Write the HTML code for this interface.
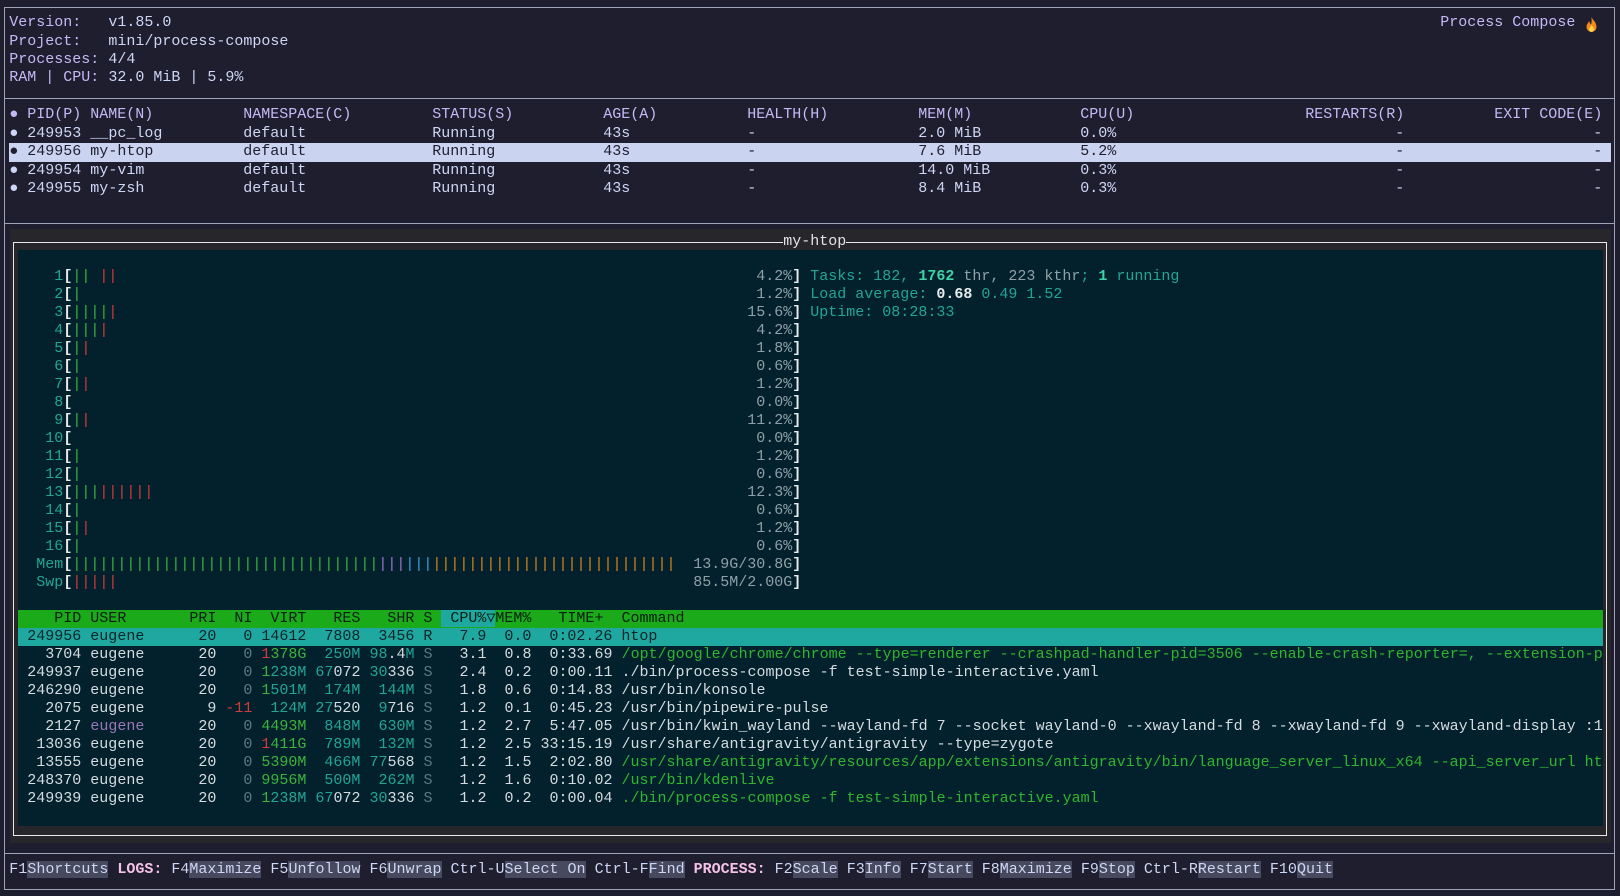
<!DOCTYPE html>
<html><head><meta charset="utf-8"><style>
*{margin:0;padding:0;box-sizing:border-box}
body{width:1620px;height:896px;background:#1e1e2e;position:relative;overflow:hidden;font-family:"Liberation Mono","DejaVu Sans Mono",monospace;font-size:15px;color:#cdd6f4}
.t{position:absolute;white-space:pre;line-height:18.42px;height:18.42px}
.h{position:absolute;white-space:pre;line-height:18px;height:18px;left:18.3px;color:#d4dcdf}
.ln{position:absolute;background:#9ea3b8}
.lb{color:#c6b8f5}
.w{color:#d4dcdf}.c{color:#22a597}.g{color:#3cb43c}.r{color:#d23b3b}.d{color:#5d7a82}.p{color:#9a78b8}.gc{color:#2fb52f}
.o{color:#d4861f}.pu{color:#9a78c8}.bl{color:#3aa0e0}.br{color:#e6ebec;font-weight:bold}.pc{color:#8fa0a6}
.k{color:#cdd6f4}.lab{background:#474a5e;color:#cdd6f4}.sec{color:#f5c2e7;font-weight:bold}
</style></head><body>
<!-- outer borders -->
<div class="ln" style="left:4px;top:7px;width:1611px;height:1px"></div>
<div class="ln" style="left:4px;top:889px;width:1611px;height:1px"></div>
<div class="ln" style="left:4px;top:7px;width:1px;height:883px"></div>
<div class="ln" style="left:1614px;top:7px;width:1px;height:883px"></div>
<div class="ln" style="left:4px;top:98px;width:1611px;height:1px"></div>
<div class="ln" style="left:4px;top:223px;width:1611px;height:1px"></div>
<div class="ln" style="left:4px;top:853px;width:1611px;height:1px"></div>

<!-- header -->
<div class="t" style="left:9.3px;top:14.1px"><span class="lb">Version:</span>   v1.85.0</div>
<div class="t" style="left:9.3px;top:32.5px"><span class="lb">Project:</span>   mini/process-compose</div>
<div class="t" style="left:9.3px;top:50.9px"><span class="lb">Processes:</span> 4/4</div>
<div class="t" style="left:9.3px;top:69.4px"><span class="lb">RAM | CPU:</span> 32.0 MiB | 5.9%</div>
<div class="t lb" style="left:1440.3px;top:14.1px">Process Compose</div>
<svg style="position:absolute;left:1585px;top:17px" width="13" height="16" viewBox="0 0 13 16"><path d="M6.5 0C7.5 3 11.5 5 11.5 10a5 5 0 0 1-10 0c0-3 2-4 2.5-6 1 1.5 1 3 2 3.5C7 5 6.5 2.5 6.5 0z" fill="#f08a1c"/><path d="M6.5 8c1 1.5 2.5 2.5 2.5 4.5a2.5 2.5 0 0 1-5 0c0-1.5 1.5-2.5 2.5-4.5z" fill="#ffd04a"/></svg>

<!-- process table -->
<div style="position:absolute;left:9.3px;top:143.1px;width:1602px;height:18.42px;background:#cad3f0"></div>
<div class="t lb" style="left:9.3px;top:106.2px">●</div>
<div class="t lb" style="left:27.3px;top:106.2px">PID(P)</div>
<div class="t lb" style="left:90.3px;top:106.2px">NAME(N)</div>
<div class="t lb" style="left:243.3px;top:106.2px">NAMESPACE(C)</div>
<div class="t lb" style="left:432.3px;top:106.2px">STATUS(S)</div>
<div class="t lb" style="left:603.3px;top:106.2px">AGE(A)</div>
<div class="t lb" style="left:747.3px;top:106.2px">HEALTH(H)</div>
<div class="t lb" style="left:918.3px;top:106.2px">MEM(M)</div>
<div class="t lb" style="left:1080.3px;top:106.2px">CPU(U)</div>
<div class="t lb" style="left:1305.3px;top:106.2px">RESTARTS(R)</div>
<div class="t lb" style="left:1494.3px;top:106.2px">EXIT CODE(E)</div>

<div class="t" style="left:9.3px;top:124.6px">● 249953 __pc_log</div>
<div class="t" style="left:243.3px;top:124.6px">default</div><div class="t" style="left:432.3px;top:124.6px">Running</div><div class="t" style="left:603.3px;top:124.6px">43s</div><div class="t" style="left:747.3px;top:124.6px">-</div><div class="t" style="left:918.3px;top:124.6px">2.0 MiB</div><div class="t" style="left:1080.3px;top:124.6px">0.0%</div><div class="t" style="left:1395.3px;top:124.6px">-</div><div class="t" style="left:1593.3px;top:124.6px">-</div>

<div class="t" style="left:9.3px;top:143.1px;color:#1e1e2e">● 249956 my-htop</div>
<div class="t" style="left:243.3px;top:143.1px;color:#1e1e2e">default</div><div class="t" style="left:432.3px;top:143.1px;color:#1e1e2e">Running</div><div class="t" style="left:603.3px;top:143.1px;color:#1e1e2e">43s</div><div class="t" style="left:747.3px;top:143.1px;color:#1e1e2e">-</div><div class="t" style="left:918.3px;top:143.1px;color:#1e1e2e">7.6 MiB</div><div class="t" style="left:1080.3px;top:143.1px;color:#1e1e2e">5.2%</div><div class="t" style="left:1395.3px;top:143.1px;color:#1e1e2e">-</div><div class="t" style="left:1593.3px;top:143.1px;color:#1e1e2e">-</div>

<div class="t" style="left:9.3px;top:161.5px">● 249954 my-vim</div>
<div class="t" style="left:243.3px;top:161.5px">default</div><div class="t" style="left:432.3px;top:161.5px">Running</div><div class="t" style="left:603.3px;top:161.5px">43s</div><div class="t" style="left:747.3px;top:161.5px">-</div><div class="t" style="left:918.3px;top:161.5px">14.0 MiB</div><div class="t" style="left:1080.3px;top:161.5px">0.3%</div><div class="t" style="left:1395.3px;top:161.5px">-</div><div class="t" style="left:1593.3px;top:161.5px">-</div>

<div class="t" style="left:9.3px;top:179.9px">● 249955 my-zsh</div>
<div class="t" style="left:243.3px;top:179.9px">default</div><div class="t" style="left:432.3px;top:179.9px">Running</div><div class="t" style="left:603.3px;top:179.9px">43s</div><div class="t" style="left:747.3px;top:179.9px">-</div><div class="t" style="left:918.3px;top:179.9px">8.4 MiB</div><div class="t" style="left:1080.3px;top:179.9px">0.3%</div><div class="t" style="left:1395.3px;top:179.9px">-</div><div class="t" style="left:1593.3px;top:179.9px">-</div>

<!-- htop panel -->
<div style="position:absolute;left:10px;top:229px;width:1601px;height:614px;background:#27272b"></div>
<div style="position:absolute;left:13px;top:242px;width:1594px;height:594px;border:1px solid #e8e8e8"></div>
<div class="t" style="left:783.3px;top:233px;background:#27272b;color:#e4e4e4">my-htop</div>
<div style="position:absolute;left:18.3px;top:250px;width:1585px;height:576px;background:#03212d;overflow:hidden">
<div style="position:relative;left:-18.3px;top:-250px">
<!-- meters -->
<div class="h c" style="left:36.3px;top:267.7px">  1<span class="br">[</span><span class="g">||</span> <span class="r">||</span></div>
<div class="h c" style="left:36.3px;top:285.7px">  2<span class="br">[</span><span class="g">|</span></div>
<div class="h c" style="left:36.3px;top:303.7px">  3<span class="br">[</span><span class="g">||||</span><span class="r">|</span></div>
<div class="h c" style="left:36.3px;top:321.7px">  4<span class="br">[</span><span class="g">|||</span><span class="r">|</span></div>
<div class="h c" style="left:36.3px;top:339.7px">  5<span class="br">[</span><span class="g">|</span><span class="r">|</span></div>
<div class="h c" style="left:36.3px;top:357.7px">  6<span class="br">[</span><span class="g">|</span></div>
<div class="h c" style="left:36.3px;top:375.7px">  7<span class="br">[</span><span class="g">|</span><span class="r">|</span></div>
<div class="h c" style="left:36.3px;top:393.7px">  8<span class="br">[</span></div>
<div class="h c" style="left:36.3px;top:411.7px">  9<span class="br">[</span><span class="g">|</span><span class="r">|</span></div>
<div class="h c" style="left:36.3px;top:429.7px"> 10<span class="br">[</span></div>
<div class="h c" style="left:36.3px;top:447.7px"> 11<span class="br">[</span><span class="g">|</span></div>
<div class="h c" style="left:36.3px;top:465.7px"> 12<span class="br">[</span><span class="g">|</span></div>
<div class="h c" style="left:36.3px;top:483.7px"> 13<span class="br">[</span><span class="g">|||</span><span class="r">||||||</span></div>
<div class="h c" style="left:36.3px;top:501.7px"> 14<span class="br">[</span><span class="g">|</span></div>
<div class="h c" style="left:36.3px;top:519.7px"> 15<span class="br">[</span><span class="g">|</span><span class="r">|</span></div>
<div class="h c" style="left:36.3px;top:537.7px"> 16<span class="br">[</span><span class="g">|</span></div>
<div class="h c" style="left:36.3px;top:555.7px">Mem<span class="br">[</span><span class="g">||||||||||||||||||||||||||||||||||</span><span class="pu">|||</span><span class="bl">|||</span><span class="o">|||||||||||||||||||||||||||</span></div>
<div class="h c" style="left:36.3px;top:573.7px">Swp<span class="br">[</span><span class="r">|||||</span></div>

<div class="h pc" style="left:0;width:801.3px;text-align:right;top:267.7px">4.2%<span class="br">]</span></div>
<div class="h pc" style="left:0;width:801.3px;text-align:right;top:285.7px">1.2%<span class="br">]</span></div>
<div class="h pc" style="left:0;width:801.3px;text-align:right;top:303.7px">15.6%<span class="br">]</span></div>
<div class="h pc" style="left:0;width:801.3px;text-align:right;top:321.7px">4.2%<span class="br">]</span></div>
<div class="h pc" style="left:0;width:801.3px;text-align:right;top:339.7px">1.8%<span class="br">]</span></div>
<div class="h pc" style="left:0;width:801.3px;text-align:right;top:357.7px">0.6%<span class="br">]</span></div>
<div class="h pc" style="left:0;width:801.3px;text-align:right;top:375.7px">1.2%<span class="br">]</span></div>
<div class="h pc" style="left:0;width:801.3px;text-align:right;top:393.7px">0.0%<span class="br">]</span></div>
<div class="h pc" style="left:0;width:801.3px;text-align:right;top:411.7px">11.2%<span class="br">]</span></div>
<div class="h pc" style="left:0;width:801.3px;text-align:right;top:429.7px">0.0%<span class="br">]</span></div>
<div class="h pc" style="left:0;width:801.3px;text-align:right;top:447.7px">1.2%<span class="br">]</span></div>
<div class="h pc" style="left:0;width:801.3px;text-align:right;top:465.7px">0.6%<span class="br">]</span></div>
<div class="h pc" style="left:0;width:801.3px;text-align:right;top:483.7px">12.3%<span class="br">]</span></div>
<div class="h pc" style="left:0;width:801.3px;text-align:right;top:501.7px">0.6%<span class="br">]</span></div>
<div class="h pc" style="left:0;width:801.3px;text-align:right;top:519.7px">1.2%<span class="br">]</span></div>
<div class="h pc" style="left:0;width:801.3px;text-align:right;top:537.7px">0.6%<span class="br">]</span></div>
<div class="h pc" style="left:0;width:801.3px;text-align:right;top:555.7px">13.9G/30.8G<span class="br">]</span></div>
<div class="h pc" style="left:0;width:801.3px;text-align:right;top:573.7px">85.5M/2.00G<span class="br">]</span></div>

<div class="h c" style="left:810.3px;top:267.7px">Tasks: 182, <span style="color:#3fd4a8;font-weight:bold">1762</span><span class="pc"> thr, 223 kthr</span>; <span style="color:#3fd4a8;font-weight:bold">1</span> running</div>
<div class="h c" style="left:810.3px;top:285.7px">Load average: <span class="br">0.68</span> 0.49 1.52</div>
<div class="h c" style="left:810.3px;top:303.7px">Uptime: 08:28:33</div>

<!-- process list -->
<div style="position:absolute;left:18.3px;top:609.7px;width:1585px;height:18px;background:#1aaa1a"></div>
<div style="position:absolute;left:18.3px;top:627.7px;width:1585px;height:18px;background:#1fa8a0"></div>
<div class="h" style="top:609.7px;color:#0a1e12">    PID USER       PRI  NI  VIRT   RES   SHR S <span style="background:#1fa8a0"> CPU%▽</span>MEM%   TIME+  Command</div>
<div class="h" style="top:627.7px;color:#0b2228"> 249956 eugene      20   0 14612  7808  3456 R   7.9  0.0  0:02.26 htop</div>
<div class="h" style="top:645.7px">   3704 eugene      20   <span class="d">0</span> <span class="r">1</span><span class="g">378G</span>  <span class="c">250M</span> <span class="c">98</span>.4<span class="c">M</span> <span class="d">S</span>   3.1  0.8  0:33.69 <span class="gc">/opt/google/chrome/chrome --type=renderer --crashpad-handler-pid=3506 --enable-crash-reporter=, --extension-process --enable-distillability-service</span></div>
<div class="h" style="top:663.7px"> 249937 eugene      20   <span class="d">0</span> <span class="g">1</span><span class="c">238M</span> <span class="c">67</span>072 <span class="c">30</span>336 <span class="d">S</span>   2.4  0.2  0:00.11 ./bin/process-compose -f test-simple-interactive.yaml</div>
<div class="h" style="top:681.7px"> 246290 eugene      20   <span class="d">0</span> <span class="g">1</span><span class="c">501M</span>  <span class="c">174M</span>  <span class="c">144M</span> <span class="d">S</span>   1.8  0.6  0:14.83 /usr/bin/konsole</div>
<div class="h" style="top:699.7px">   2075 eugene       9 <span class="r">-11</span>  <span class="c">124M</span> <span class="c">27</span>520  <span class="c">9</span>716 <span class="d">S</span>   1.2  0.1  0:45.23 /usr/bin/pipewire-pulse</div>
<div class="h" style="top:717.7px">   2127 <span class="p">eugene</span>      20   <span class="d">0</span> <span class="g">4493M</span>  <span class="c">848M</span>  <span class="c">630M</span> <span class="d">S</span>   1.2  2.7  5:47.05 /usr/bin/kwin_wayland --wayland-fd 7 --socket wayland-0 --xwayland-fd 8 --xwayland-fd 9 --xwayland-display :1 --xwayland-xauthority</div>
<div class="h" style="top:735.7px">  13036 eugene      20   <span class="d">0</span> <span class="r">1</span><span class="g">411G</span>  <span class="c">789M</span>  <span class="c">132M</span> <span class="d">S</span>   1.2  2.5 33:15.19 /usr/share/antigravity/antigravity --type=zygote</div>
<div class="h" style="top:753.7px">  13555 eugene      20   <span class="d">0</span> <span class="g">5390M</span>  <span class="c">466M</span> <span class="c">77</span>568 <span class="d">S</span>   1.2  1.5  2:02.80 <span class="gc">/usr/share/antigravity/resources/app/extensions/antigravity/bin/language_server_linux_x64 --api_server_url https://example</span></div>
<div class="h" style="top:771.7px"> 248370 eugene      20   <span class="d">0</span> <span class="g">9956M</span>  <span class="c">500M</span>  <span class="c">262M</span> <span class="d">S</span>   1.2  1.6  0:10.02 <span class="gc">/usr/bin/kdenlive</span></div>
<div class="h" style="top:789.7px"> 249939 eugene      20   <span class="d">0</span> <span class="g">1</span><span class="c">238M</span> <span class="c">67</span>072 <span class="c">30</span>336 <span class="d">S</span>   1.2  0.2  0:00.04 <span class="gc">./bin/process-compose -f test-simple-interactive.yaml</span></div>
</div></div>

<!-- bottom bar -->
<div class="t" style="left:9.3px;top:861.4px"><span class="k">F1</span><span class="lab">Shortcuts</span> <span class="sec">LOGS:</span> <span class="k">F4</span><span class="lab">Maximize</span> <span class="k">F5</span><span class="lab">Unfollow</span> <span class="k">F6</span><span class="lab">Unwrap</span> <span class="k">Ctrl-U</span><span class="lab">Select On</span> <span class="k">Ctrl-F</span><span class="lab">Find</span> <span class="sec">PROCESS:</span> <span class="k">F2</span><span class="lab">Scale</span> <span class="k">F3</span><span class="lab">Info</span> <span class="k">F7</span><span class="lab">Start</span> <span class="k">F8</span><span class="lab">Maximize</span> <span class="k">F9</span><span class="lab">Stop</span> <span class="k">Ctrl-R</span><span class="lab">Restart</span> <span class="k">F10</span><span class="lab">Quit</span></div>
</body></html>
